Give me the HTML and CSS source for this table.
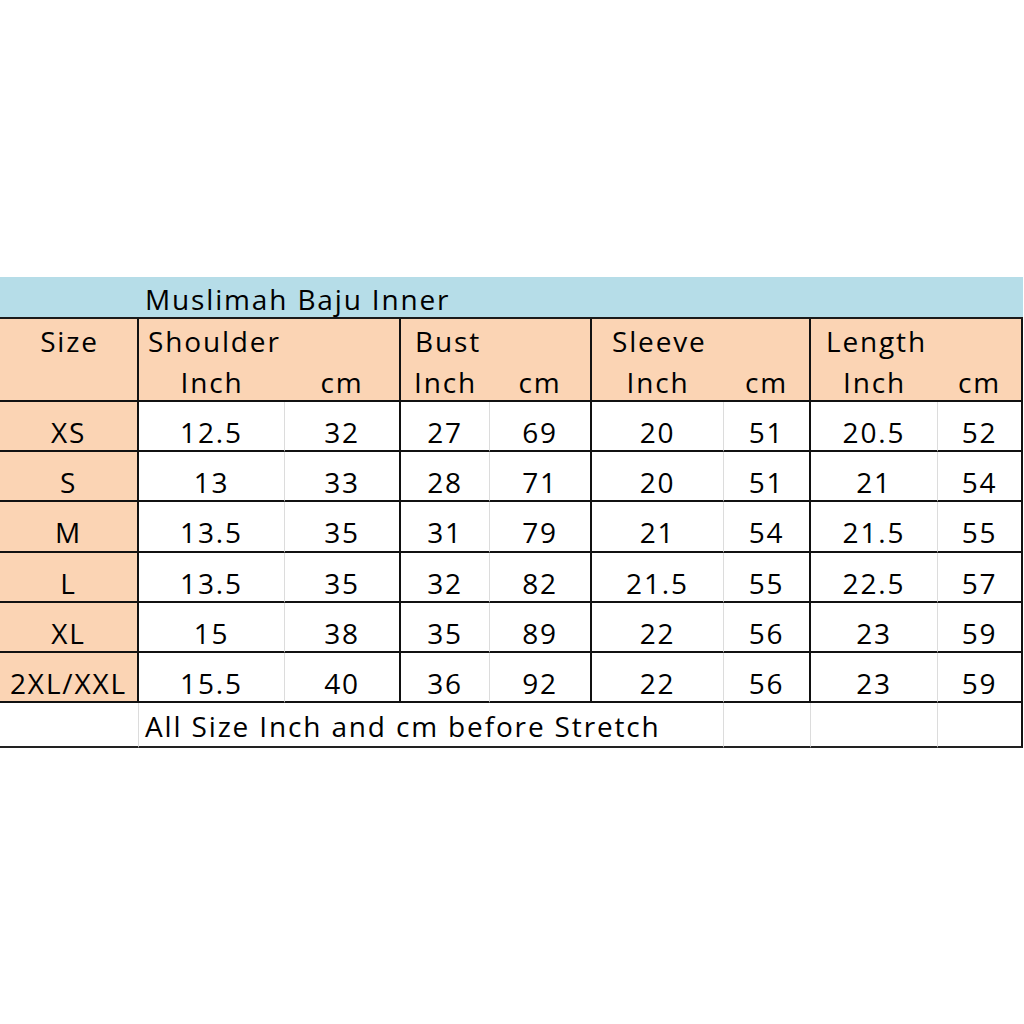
FILE: index.html
```html
<!DOCTYPE html>
<html lang="ms">
<head>
<meta charset="utf-8">
<title>Muslimah Baju Inner - Size Chart</title>
<link rel="stylesheet" href="styles.css">
</head>
<body>
<div class="sheet">
  <div class="row r-title">
    <div class="c title">Muslimah Baju Inner</div>
  </div>
  <div class="row r-head1">
    <div class="c size-h peach k">Size</div>
    <div class="c grp shoulder peach k">Shoulder</div>
    <div class="c grp bust peach k">Bust</div>
    <div class="c grp sleeve peach k">Sleeve</div>
    <div class="c grp length peach k">Length</div>
  </div>
  <div class="row r-head2">
    <div class="c peach">Inch</div><div class="c peach k">cm</div>
    <div class="c peach">Inch</div><div class="c peach k">cm</div>
    <div class="c peach">Inch</div><div class="c peach k">cm</div>
    <div class="c peach">Inch</div><div class="c peach k">cm</div>
  </div>
  <div class="row r-data">
    <div class="c peach k">XS</div>
    <div class="c g">12.5</div><div class="c k">32</div>
    <div class="c g">27</div><div class="c k">69</div>
    <div class="c g">20</div><div class="c k">51</div>
    <div class="c g">20.5</div><div class="c k">52</div>
  </div>
  <div class="row r-data">
    <div class="c peach k">S</div>
    <div class="c g">13</div><div class="c k">33</div>
    <div class="c g">28</div><div class="c k">71</div>
    <div class="c g">20</div><div class="c k">51</div>
    <div class="c g">21</div><div class="c k">54</div>
  </div>
  <div class="row r-data">
    <div class="c peach k">M</div>
    <div class="c g">13.5</div><div class="c k">35</div>
    <div class="c g">31</div><div class="c k">79</div>
    <div class="c g">21</div><div class="c k">54</div>
    <div class="c g">21.5</div><div class="c k">55</div>
  </div>
  <div class="row r-data">
    <div class="c peach k">L</div>
    <div class="c g">13.5</div><div class="c k">35</div>
    <div class="c g">32</div><div class="c k">82</div>
    <div class="c g">21.5</div><div class="c k">55</div>
    <div class="c g">22.5</div><div class="c k">57</div>
  </div>
  <div class="row r-data">
    <div class="c peach k">XL</div>
    <div class="c g">15</div><div class="c k">38</div>
    <div class="c g">35</div><div class="c k">89</div>
    <div class="c g">22</div><div class="c k">56</div>
    <div class="c g">23</div><div class="c k">59</div>
  </div>
  <div class="row r-data">
    <div class="c peach k">2XL/XXL</div>
    <div class="c g">15.5</div><div class="c k">40</div>
    <div class="c g">36</div><div class="c k">92</div>
    <div class="c g">22</div><div class="c k">56</div>
    <div class="c g">23</div><div class="c k">59</div>
  </div>
  <div class="row r-foot">
    <div class="c g"></div>
    <div class="c note g">All Size Inch and cm before Stretch</div>
    <div class="c g"></div>
    <div class="c g"></div>
    <div class="c k"></div>
  </div>
</div>
</body>
</html>
```
FILE: styles.css
```css
body {
  margin: 0;
  background: #ffffff;
  font-family: "Open Sans", "Liberation Sans", sans-serif;
  color: #000000;
}

.sheet {
  display: grid;
  grid-template-columns: 139px 146px 116px 89px 102px 132px 87px 127px 85px;
  grid-template-rows: 42px 41px 42px 50px 50px 51px 50px 50px 50px 45px;
  margin-top: 277px;
  width: 1023px;
  font-size: 28px;
  font-weight: 500;
  line-height: 28px;
  letter-spacing: 1.85px;
}

.row {
  display: contents;
}

.c {
  box-sizing: border-box;
  white-space: nowrap;
  text-align: center;
}

.peach {
  background: #fbd4b4;
}

.k {
  border-right: 2px solid #111111;
}

.g {
  border-right: 1px solid #dcdcdc;
}

/* title band */
.title {
  grid-column: 1 / -1;
  background: #b6dde8;
  border-bottom: 2px solid #1a1a1a;
  text-align: left;
  padding: 8px 0 0 145px;
}

/* header */
.r-head1 .c {
  padding-top: 8px;
}

.size-h {
  grid-row: span 2;
  border-bottom: 2px solid #111111;
  padding-left: 2px;
}

.grp {
  grid-column: span 2;
  text-align: left;
}

.shoulder { padding-left: 9px; }
.bust { padding-left: 14px; }
.sleeve { padding-left: 20px; }
.length { padding-left: 15px; }

.r-head2 .c {
  padding-top: 8px;
  border-bottom: 2px solid #111111;
}

/* data rows */
.r-data .c {
  padding-top: 16px;
  border-bottom: 2px solid #111111;
}

/* footer */
.r-foot .c {
  padding-top: 9px;
  border-bottom: 2px solid #222222;
}

.note {
  grid-column: span 5;
  text-align: left;
  padding-left: 6px;
}
```
